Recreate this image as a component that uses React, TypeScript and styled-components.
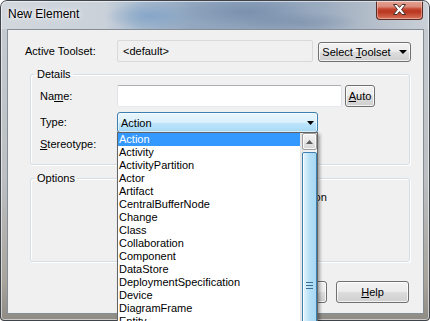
import React from "react";
import styled, { createGlobalStyle } from "styled-components";

const Global = createGlobalStyle`
  html, body { margin: 0; padding: 0; background: #ffffff; overflow: hidden; }
  body { font-family: "Liberation Sans", Arial, sans-serif; font-size: 11px; color: #000; }
  * { box-sizing: border-box; }
`;

const Window = styled.div`
  position: relative;
  width: 430px;
  height: 321px;
  display: flex;
  flex-direction: column;
  overflow: hidden;
  border-radius: 7px 7px 4px 4px;
  background: linear-gradient(to bottom, #c6ccd3 0%, #bcc0c4 55%, #a8a49c 88%, #8e8a84 100%);
  &::after {
    content: "";
    position: absolute;
    inset: 0;
    border-radius: 7px 7px 4px 4px;
    border: 1px solid #3e444a;
    box-shadow: inset 0 0 0 1px rgba(255, 255, 255, 0.55);
    pointer-events: none;
  }
`;

const TitleBar = styled.div`
  height: 29px;
  flex: none;
  display: flex;
  align-items: flex-start;
  padding: 0 7px 0 8px;
  background:
    radial-gradient(ellipse 45px 14px at 150px 16px, rgba(125, 160, 200, 0.75), transparent),
    radial-gradient(ellipse 70px 16px at 245px 12px, rgba(105, 130, 165, 0.55), transparent),
    radial-gradient(ellipse 60px 10px at 300px 22px, rgba(115, 135, 165, 0.5), transparent),
    linear-gradient(to right, #d2d7dd 0px, #cad1d9 105px, #a6bace 140px, #93a8c0 190px, #8ea2ba 260px, #9aabbf 320px, #b3bdc9 370px, #c6cdd5 420px, #ccd2d8 430px);
`;

const Title = styled.div`
  margin-top: 7px;
  font-family: "Liberation Sans", Arial, sans-serif;
  font-size: 12px;
  line-height: 15px;
  color: #000;
  text-shadow: 0 0 6px rgba(255, 255, 255, 0.95), 0 0 3px rgba(255, 255, 255, 0.9);
`;

const CloseButton = styled.div`
  margin-left: auto;
  width: 47px;
  height: 20px;
  display: flex;
  align-items: center;
  justify-content: center;
  border: 1px solid #5b2c24;
  border-top: none;
  border-radius: 0 0 4px 4px;
  background: linear-gradient(to bottom, #e7a698 0%, #da8b79 35%, #c5452f 48%, #b93520 62%, #cc5a42 85%, #d8745d 100%);
  box-shadow: inset 0 0 0 1px rgba(255, 220, 210, 0.45);
`;

const Body = styled.div`
  flex: 1;
  display: flex;
  padding: 0 6px 7px 7px;
  min-height: 0;
`;

const Client = styled.div`
  flex: 1;
  display: flex;
  flex-direction: column;
  border: 1px solid #858d96;
  background: #f0f0f0;
  padding-top: 10px;
`;

const ToolsetRow = styled.div`
  display: flex;
  align-items: flex-end;
  padding-left: 17px;
  height: 22px;
`;

const Label = styled.div<{ $w: number }>`
  width: ${(p) => p.$w}px;
  flex: none;
  align-self: center;
  line-height: 13px;
  white-space: nowrap;
`;

const ReadOnlyBox = styled.div`
  width: 196px;
  height: 22px;
  flex: none;
  display: flex;
  align-items: center;
  padding-left: 5px;
  border: 1px solid #d9d9d9;
  border-radius: 2px;
  background: #f0f0f0;
  color: #000;
`;

const PushButton = styled.div<{ $w: number; $h?: number; $ml?: number }>`
  width: ${(p) => p.$w}px;
  height: ${(p) => p.$h ?? 20}px;
  margin-left: ${(p) => p.$ml ?? 0}px;
  flex: none;
  display: flex;
  align-items: center;
  justify-content: center;
  gap: 8px;
  border: 1px solid #707070;
  border-radius: 3px;
  background: linear-gradient(to bottom, #f2f2f2 0%, #ebebeb 50%, #dddddd 50%, #cfcfcf 100%);
  box-shadow: inset 0 0 0 1px rgba(255, 255, 255, 0.75);
  white-space: nowrap;
  line-height: 13px;
`;

const Group = styled.fieldset<{ $h: number; $mt: number }>`
  margin: ${(p) => p.$mt}px 13px 0 22px;
  height: ${(p) => p.$h}px;
  padding: 4px 8px 0 9px;
  border: 1px solid #d5dfe5;
  border-radius: 3px;
  box-shadow: inset 1px 1px 0 #ffffff, 1px 1px 0 #ffffff;
  min-width: 0;
  display: flex;
  flex-direction: column;
`;

const Legend = styled.legend`
  margin-left: -5px;
  padding: 0 2px;
  line-height: 13px;
  font-size: 11px;
`;

const FieldRow = styled.div<{ $mt?: number; $h: number }>`
  display: flex;
  align-items: center;
  height: ${(p) => p.$h}px;
  margin-top: ${(p) => p.$mt ?? 0}px;
`;

const TextInput = styled.div`
  width: 225px;
  height: 22px;
  flex: none;
  background: #fff;
  border: 1px solid;
  border-color: #abadb3 #dbdfe6 #e3e9ef #e2e3ea;
  border-radius: 2px;
`;

const Combo = styled.div<{ $hot?: boolean; $w: number }>`
  width: ${(p) => p.$w}px;
  height: 21px;
  flex: none;
  display: flex;
  align-items: center;
  justify-content: space-between;
  padding: 0 3px 0 3px;
  border: 1px solid ${(p) => (p.$hot ? "#3c7fb1" : "#707070")};
  border-radius: 3px;
  background: ${(p) =>
    p.$hot
      ? "linear-gradient(to bottom, #eaf6fd 0%, #d9f0fc 50%, #bee6fd 50%, #a7d9f5 100%)"
      : "linear-gradient(to bottom, #f2f2f2 0%, #ebebeb 50%, #dddddd 50%, #cfcfcf 100%)"};
  box-shadow: inset 0 0 0 1px rgba(255, 255, 255, 0.6);
`;

const OptionRow = styled.div`
  display: flex;
  align-items: center;
  gap: 4px;
  height: 15px;
  margin-left: 101px;
  white-space: nowrap;
`;

const CheckBox = styled.div`
  width: 13px;
  height: 13px;
  flex: none;
  border: 1px solid #8f8f8f;
  background: linear-gradient(135deg, #dcdcdc, #ffffff);
`;

const ButtonRow = styled.div`
  display: flex;
  justify-content: flex-end;
  gap: 9px;
  margin: 19px 14px 0 0;
`;

const DropList = styled.div`
  position: absolute;
  left: 117px;
  top: 132px;
  width: 201px;
  height: 240px;
  display: flex;
  background: #fff;
  border: 1px solid #646464;
  box-shadow: 2px 2px 3px rgba(0, 0, 0, 0.35);
  z-index: 2;
`;

const Items = styled.ul`
  flex: 1;
  min-width: 0;
  margin: 0;
  padding: 0;
  list-style: none;
  overflow: hidden;
`;

const Item = styled.li<{ $selected?: boolean }>`
  height: 13px;
  line-height: 13px;
  padding-left: 1px;
  white-space: nowrap;
  background: ${(p) => (p.$selected ? "#3399ff" : "transparent")};
  color: ${(p) => (p.$selected ? "#ffffff" : "#000000")};
`;

const ScrollBar = styled.div`
  width: 17px;
  flex: none;
  display: flex;
  flex-direction: column;
  gap: 2px;
  padding: 0 0 0 2px;
  background: linear-gradient(to right, #e3e3e3, #f2f2f2 40%, #f5f5f5);
`;

const ArrowButton = styled.div`
  height: 17px;
  flex: none;
  display: flex;
  align-items: center;
  justify-content: center;
  border: 1px solid #9c9c9c;
  border-radius: 2px;
  background: linear-gradient(to bottom, #f4f4f4 0%, #e6e6e6 50%, #d5d5d5 100%);
  box-shadow: inset 0 0 0 1px rgba(255, 255, 255, 0.8);
`;

const Thumb = styled.div`
  height: 266px;
  flex: none;
  display: flex;
  align-items: center;
  justify-content: center;
  border: 1px solid #3c7fb1;
  border-radius: 2px;
  background: linear-gradient(to right, #e4f4fc 0%, #c9e9fa 30%, #b3def6 55%, #a9d8f3 100%);
  box-shadow: inset 1px 0 0 rgba(255, 255, 255, 0.85);
`;

const Triangle = ({ w = 7, h = 4, color = "#000" }: { w?: number; h?: number; color?: string }) => (
  <svg width={w} height={h} viewBox={`0 0 ${w} ${h}`}>
    <polygon points={`0,0 ${w},0 ${w / 2},${h}`} fill={color} />
  </svg>
);

const items = [
  "Action",
  "Activity",
  "ActivityPartition",
  "Actor",
  "Artifact",
  "CentralBufferNode",
  "Change",
  "Class",
  "Collaboration",
  "Component",
  "DataStore",
  "DeploymentSpecification",
  "Device",
  "DiagramFrame",
  "Entity",
  "EntryPoint",
  "Event",
];

export default function App() {
  return (
    <>
      <Global />
      <Window>
        <TitleBar>
          <Title>New Element</Title>
          <CloseButton>
            <svg width="13" height="11" viewBox="0 0 13 11">
              <polygon
                points="0.5,0.5 4,0.5 6.5,3.4 9,0.5 12.5,0.5 8.6,5.5 12.5,10.5 9,10.5 6.5,7.6 4,10.5 0.5,10.5 4.4,5.5"
                fill="#ffffff"
                stroke="#46312c"
                strokeWidth="1"
                strokeLinejoin="round"
              />
            </svg>
          </CloseButton>
        </TitleBar>
        <Body>
          <Client>
            <ToolsetRow>
              <Label $w={92}>Active Toolset:</Label>
              <ReadOnlyBox>&lt;default&gt;</ReadOnlyBox>
              <PushButton $w={93} $ml={5}>
                <span>
                  Select <u>T</u>oolset
                </span>
                <Triangle w={8} h={4} />
              </PushButton>
            </ToolsetRow>

            <Group $mt={6} $h={97}>
              <Legend>Details</Legend>
              <FieldRow $h={22}>
                <Label $w={77}>
                  Na<u>m</u>e:
                </Label>
                <TextInput />
                <PushButton $w={30} $h={22} $ml={3}>
                  <span>
                    <u>A</u>uto
                  </span>
                </PushButton>
              </FieldRow>
              <FieldRow $h={21} $mt={5}>
                <Label $w={77}>Type:</Label>
                <Combo $hot $w={201}>
                  <span>Action</span>
                  <Triangle />
                </Combo>
              </FieldRow>
              <FieldRow $h={21} $mt={1}>
                <Label $w={77}>
                  <u>S</u>tereotype:
                </Label>
                <Combo $w={199}>
                  <span />
                  <Triangle />
                </Combo>
              </FieldRow>
            </Group>

            <Group $mt={7} $h={90}>
              <Legend>Options</Legend>
              <OptionRow>
                <CheckBox />
                <span>Open properties dialog on creation</span>
              </OptionRow>
            </Group>

            <ButtonRow>
              <PushButton $w={73} $h={22}>OK</PushButton>
              <PushButton $w={73} $h={22}>Cancel</PushButton>
              <PushButton $w={73} $h={22}>
                <span>
                  <u>H</u>elp
                </span>
              </PushButton>
            </ButtonRow>
          </Client>
        </Body>

        <DropList>
          <Items>
            {items.map((name, i) => (
              <Item key={name} $selected={i === 0}>
                {name}
              </Item>
            ))}
          </Items>
          <ScrollBar>
            <ArrowButton>
              <svg width="7" height="4" viewBox="0 0 7 4">
                <polygon points="0,4 7,4 3.5,0" fill="#5c5c5c" />
              </svg>
            </ArrowButton>
            <Thumb>
              <svg width="7" height="7" viewBox="0 0 7 7">
                <rect x="0" y="0" width="7" height="1" fill="#3a6e94" />
                <rect x="0" y="3" width="7" height="1" fill="#3a6e94" />
                <rect x="0" y="6" width="7" height="1" fill="#3a6e94" />
              </svg>
            </Thumb>
          </ScrollBar>
        </DropList>
      </Window>
    </>
  );
}
